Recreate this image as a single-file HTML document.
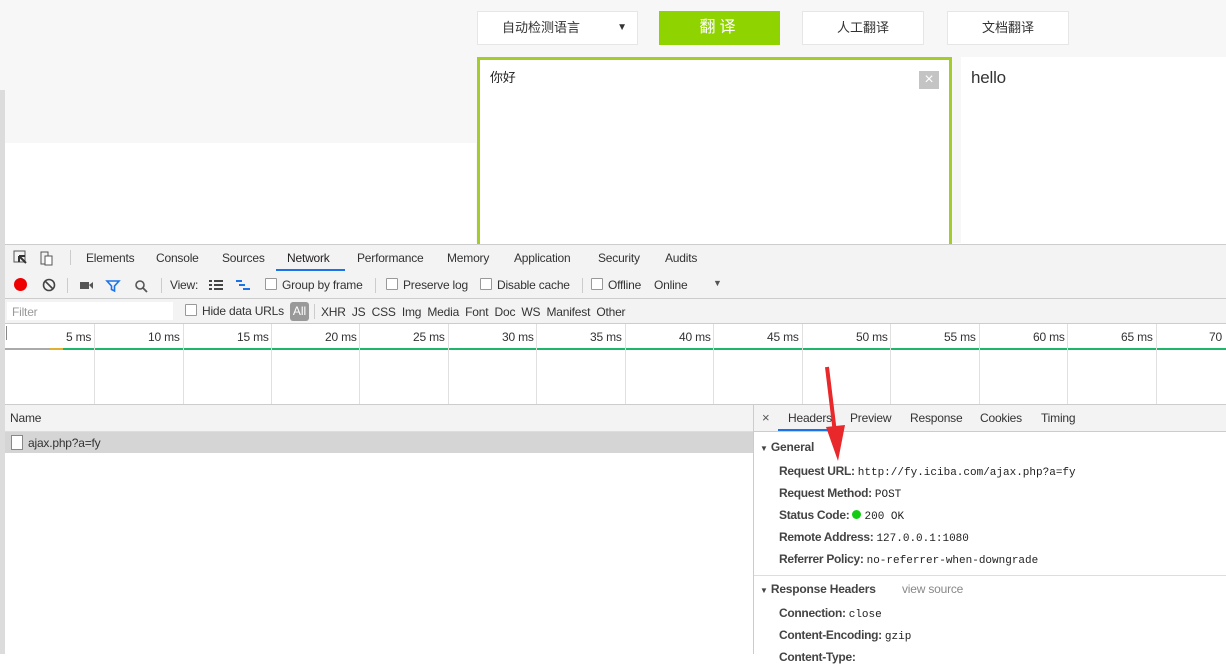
<!DOCTYPE html><html><head><meta charset="utf-8"><style>
body{margin:0;width:1226px;height:654px;position:relative;overflow:hidden;background:#fff;font-family:"Liberation Sans","Noto Sans CJK SC",sans-serif;font-size:12px;color:#333}
.a{position:absolute}
.t{position:absolute;white-space:nowrap;letter-spacing:-0.2px}
.btn{position:absolute;background:#fff;border:1px solid #e6e6e6;text-align:center;font-size:14px;line-height:32px;height:32px;top:11px}
.gl{position:absolute;top:324px;width:1px;height:80px;background:#e0e0e0}
.ms{position:absolute;top:330px;font-size:12px;color:#333;letter-spacing:-0.2px}
.cb{display:inline-block;width:10px;height:10px;border:1px solid #999;background:#fff;vertical-align:-1px;margin-right:5px;border-radius:1px}
.mono{font-family:"Liberation Mono",monospace;font-size:11px;color:#222;letter-spacing:0}
.k{position:absolute;left:779px;font-weight:bold;color:#444;white-space:nowrap;letter-spacing:-0.3px}
</style></head><body>
<div class="a" style="left:0;top:0;width:1226px;height:243px;background:#f7f7f7"></div>
<div class="a" style="left:0;top:143px;width:476px;height:100px;background:#fff"></div>
<div class="a" style="left:0;top:90px;width:5px;height:564px;background:#dcdcdc"></div>
<div class="btn" style="left:477px;width:159px;font-size:13px"><span style="position:absolute;left:24px">自动检测语言</span><span style="position:absolute;right:10px;font-size:10px">▼</span></div>
<div class="btn" style="left:659px;width:119px;background:#8fd400;border-color:#8fd400;color:#fff;font-size:16px;letter-spacing:4px">翻译</div>
<div class="btn" style="left:802px;width:120px;font-size:13px">人工翻译</div>
<div class="btn" style="left:947px;width:120px;font-size:13px">文档翻译</div>
<div class="a" style="left:477px;top:57px;width:469px;height:190px;border:3px solid #a4cd2b;background:#fff"></div>
<div class="t" style="left:490px;top:67px;font-size:13px;color:#222">你好</div>
<div class="a" style="left:919px;top:71px;width:20px;height:18px;background:#c4c4c4;color:#fff;text-align:center;font-size:16px;line-height:18px">×</div>
<div class="a" style="left:961px;top:57px;width:265px;height:186px;background:#fff"></div>
<div class="t" style="left:971px;top:68px;font-size:17px;color:#333">hello</div>

<div class="a" style="left:5px;top:244px;width:1221px;height:27px;background:#f3f3f3;border-top:1px solid #ccc;border-bottom:1px solid #ccc"></div>
<svg class="a" style="left:13px;top:250px" width="46" height="16"><rect x="1" y="1" width="11" height="11" fill="none" stroke="#555"/><path d="M6 6l7 7M6 6v6M6 6h6" stroke="#333" stroke-width="2" fill="none"/><rect x="28" y="2" width="7" height="12" fill="none" stroke="#555"/><rect x="32" y="6" width="7" height="9" fill="#fff" stroke="#555"/></svg>
<div class="a" style="left:70px;top:250px;width:1px;height:15px;background:#ccc"></div>
<div class="t" style="left:86px;top:251px">Elements</div>
<div class="t" style="left:156px;top:251px">Console</div>
<div class="t" style="left:222px;top:251px">Sources</div>
<div class="t" style="left:287px;top:251px;color:#222">Network</div>
<div class="a" style="left:276px;top:269px;width:69px;height:2px;background:#1a73e8"></div>
<div class="t" style="left:357px;top:251px">Performance</div>
<div class="t" style="left:447px;top:251px">Memory</div>
<div class="t" style="left:514px;top:251px">Application</div>
<div class="t" style="left:598px;top:251px">Security</div>
<div class="t" style="left:665px;top:251px">Audits</div>

<div class="a" style="left:5px;top:272px;width:1221px;height:26px;background:#f3f3f3;border-bottom:1px solid #ccc"></div>
<div class="a" style="left:14px;top:278px;width:13px;height:13px;border-radius:50%;background:#e00"></div>
<svg class="a" style="left:42px;top:278px" width="14" height="14"><circle cx="7" cy="7" r="5.5" fill="none" stroke="#444" stroke-width="1.6"/><path d="M3 3l8 8" stroke="#444" stroke-width="1.6"/></svg>
<div class="a" style="left:67px;top:278px;width:1px;height:15px;background:#ccc"></div>
<svg class="a" style="left:79px;top:279px" width="75" height="14"><rect x="1" y="3" width="9" height="7" fill="#555"/><path d="M10 6l4-3v7z" fill="#555"/><path d="M28 2h12l-4.5 5v5l-3-1.5v-3.5z" fill="none" stroke="#1a73e8" stroke-width="1.6"/><circle cx="61" cy="6" r="4" fill="none" stroke="#555" stroke-width="1.6"/><path d="M64 9l4 4" stroke="#555" stroke-width="1.8"/></svg>
<div class="a" style="left:161px;top:278px;width:1px;height:15px;background:#ccc"></div>
<div class="t" style="left:170px;top:278px">View:</div>
<svg class="a" style="left:209px;top:279px" width="45" height="12"><path d="M0 2h3M5 2h9M0 6h3M5 6h9M0 10h3M5 10h9" stroke="#444" stroke-width="2"/><path d="M27 2h6M30 6h6M34 10h7" stroke="#1a73e8" stroke-width="2"/></svg>
<div class="t" style="left:265px;top:278px"><span class="cb"></span>Group by frame</div>
<div class="a" style="left:375px;top:278px;width:1px;height:15px;background:#ccc"></div>
<div class="t" style="left:386px;top:278px"><span class="cb"></span>Preserve log</div>
<div class="t" style="left:480px;top:278px"><span class="cb"></span>Disable cache</div>
<div class="a" style="left:582px;top:278px;width:1px;height:15px;background:#ccc"></div>
<div class="t" style="left:591px;top:278px"><span class="cb"></span>Offline</div>
<div class="t" style="left:654px;top:278px">Online</div>
<div class="t" style="left:713px;top:278px;font-size:9px;color:#555">▼</div>

<div class="a" style="left:5px;top:299px;width:1221px;height:24px;background:#f3f3f3;border-bottom:1px solid #ccc"></div>
<div class="a" style="left:7px;top:302px;width:166px;height:18px;background:#fff"></div>
<div class="t" style="left:12px;top:305px;color:#999">Filter</div>
<div class="t" style="left:185px;top:304px"><span class="cb"></span>Hide data URLs</div>
<div class="a" style="left:290px;top:302px;width:19px;height:19px;background:#999;border-radius:3px;color:#fff;text-align:center;line-height:19px">All</div>
<div class="a" style="left:314px;top:304px;width:1px;height:15px;background:#ccc"></div>
<div class="t" style="left:321px;top:305px;word-spacing:3px">XHR JS CSS Img Media Font Doc WS Manifest Other</div>

<div class="a" style="left:5px;top:348px;width:1221px;height:2px;background:#1fb56b"></div>
<div class="a" style="left:5px;top:348px;width:50px;height:2px;background:#aaa"></div>
<div class="a" style="left:50px;top:348px;width:13px;height:2px;background:#e0b030"></div>
<div class="a" style="left:6px;top:326px;width:1px;height:14px;background:#888"></div>
<div class="gl" style="left:94px"></div><div class="gl" style="left:183px"></div><div class="gl" style="left:271px"></div><div class="gl" style="left:359px"></div><div class="gl" style="left:448px"></div><div class="gl" style="left:536px"></div><div class="gl" style="left:625px"></div><div class="gl" style="left:713px"></div><div class="gl" style="left:802px"></div><div class="gl" style="left:890px"></div><div class="gl" style="left:979px"></div><div class="gl" style="left:1067px"></div><div class="gl" style="left:1156px"></div>
<div class="ms" style="left:66px">5 ms</div><div class="ms" style="left:148px">10 ms</div><div class="ms" style="left:237px">15 ms</div><div class="ms" style="left:325px">20 ms</div><div class="ms" style="left:413px">25 ms</div><div class="ms" style="left:502px">30 ms</div><div class="ms" style="left:590px">35 ms</div><div class="ms" style="left:679px">40 ms</div><div class="ms" style="left:767px">45 ms</div><div class="ms" style="left:856px">50 ms</div><div class="ms" style="left:944px">55 ms</div><div class="ms" style="left:1033px">60 ms</div><div class="ms" style="left:1121px">65 ms</div><div class="ms" style="left:1209px">70</div>
<div class="a" style="left:5px;top:404px;width:1221px;height:1px;background:#ccc"></div>

<div class="a" style="left:5px;top:405px;width:748px;height:26px;background:#f3f3f3;border-bottom:1px solid #ddd"></div>
<div class="t" style="left:10px;top:411px">Name</div>
<div class="a" style="left:5px;top:432px;width:748px;height:21px;background:#d5d5d5"></div>
<div class="a" style="left:11px;top:435px;width:10px;height:13px;background:#fff;border:1px solid #888"></div>
<div class="t" style="left:28px;top:436px">ajax.php?a=fy</div>
<div class="a" style="left:753px;top:405px;width:1px;height:249px;background:#ccc"></div>

<div class="a" style="left:754px;top:405px;width:472px;height:26px;background:#f3f3f3;border-bottom:1px solid #ccc"></div>
<div class="t" style="left:762px;top:410px;font-size:13px;color:#555">×</div>
<div class="t" style="left:788px;top:411px">Headers</div>
<div class="a" style="left:778px;top:429px;width:62px;height:2px;background:#1a73e8"></div>
<div class="t" style="left:850px;top:411px">Preview</div>
<div class="t" style="left:910px;top:411px">Response</div>
<div class="t" style="left:980px;top:411px">Cookies</div>
<div class="t" style="left:1041px;top:411px">Timing</div>
<div class="t" style="left:760px;top:440px;font-weight:bold;color:#444"><span style="font-size:8px">▼</span> General</div>
<div class="k" style="top:464px">Request URL: <span class="mono" style="font-weight:normal">http://fy.iciba.com/ajax.php?a=fy</span></div>
<div class="k" style="top:486px">Request Method: <span class="mono" style="font-weight:normal">POST</span></div>
<div class="k" style="top:508px">Status Code: <span style="display:inline-block;width:9px;height:9px;border-radius:50%;background:#1c1;vertical-align:0"></span> <span class="mono" style="font-weight:normal">200 OK</span></div>
<div class="k" style="top:530px">Remote Address: <span class="mono" style="font-weight:normal">127.0.0.1:1080</span></div>
<div class="k" style="top:552px">Referrer Policy: <span class="mono" style="font-weight:normal">no-referrer-when-downgrade</span></div>
<div class="a" style="left:754px;top:575px;width:472px;height:1px;background:#ddd"></div>
<div class="t" style="left:760px;top:582px;font-weight:bold;color:#444"><span style="font-size:8px">▼</span> Response Headers</div>
<div class="t" style="left:902px;top:582px;color:#888">view source</div>
<div class="k" style="top:606px">Connection: <span class="mono" style="font-weight:normal">close</span></div>
<div class="k" style="top:628px">Content-Encoding: <span class="mono" style="font-weight:normal">gzip</span></div>
<div class="k" style="top:650px">Content-Type:</div>

<svg class="a" style="left:820px;top:365px" width="30" height="100"><path d="M7 2L15 68" stroke="#e8282a" stroke-width="4"/><path d="M6 62l19-2-7 36z" fill="#e8282a"/></svg>
</body></html>
